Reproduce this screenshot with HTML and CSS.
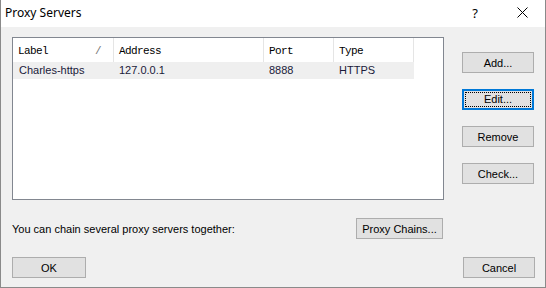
FILE: index.html
```html
<!DOCTYPE html>
<html lang="en">
<head>
    <meta charset="UTF-8">
    <title>Proxy Servers</title>
    <link rel="stylesheet" href="styles.css">
</head>
<body>

<div class="window">
  <div class="titlebar">
    <span class="title">Proxy Servers</span>
    <span class="help">?</span>
    <span class="close">
      <svg width="11" height="11" viewBox="0 0 11 11"><path d="M0.5 0.5 L10.5 10.5 M10.5 0.5 L0.5 10.5" stroke="#000" stroke-width="1" fill="none"/></svg>
    </span>
  </div>

  <div class="content">
    <div class="top">
      <!-- liste des serveurs -->
      <div class="list">
        <div class="grid header">
          <div class="cell">Label<span class="sort">/</span></div>
          <div class="cell">Address</div>
          <div class="cell">Port</div>
          <div class="cell">Type</div>
        </div>
        <div class="grid row">
          <div class="cell">Charles-https</div>
          <div class="cell">127.0.0.1</div>
          <div class="cell">8888</div>
          <div class="cell">HTTPS</div>
        </div>
      </div>

      <div class="side">
        <button class="btn">Add...</button>
        <button class="btn focused"><span>Edit...</span></button>
        <button class="btn">Remove</button>
        <button class="btn">Check...</button>
      </div>
    </div>

    <div class="chain">
      <span>You can chain several proxy servers together:</span>
      <button class="btn wide">Proxy Chains...</button>
    </div>

    <div class="bottom">
      <button class="btn">OK</button>
      <button class="btn">Cancel</button>
    </div>
  </div>
</div>

</body>
</html>
```

FILE: styles.css
```css
body {
    margin: 0;
    background: #fff;
    font-family: 'Liberation Sans', Arial, sans-serif;
}
.window {
    width: 546px;
    height: 288px;
    box-sizing: border-box;
    border: 1px solid #8a8a8a;
    border-top: none;
    background: #f0f0f0;
}
.titlebar {
    height: 27px;
    background: #fff;
    display: flex;
    align-items: center;
    padding-left: 4px;
}
.title {
    font-family: 'Noto Sans', sans-serif;
    font-size: 12px;
    color: #000;
    flex: 1;
    padding-bottom: 2px;
}
.help {
    font-family: 'Noto Sans', sans-serif;
    font-size: 13px;
    margin-right: 39px;
    padding-bottom: 2px;
}
.close {
    display: flex;
    margin-right: 17px;
    padding-bottom: 2px;
}
.content {
    padding: 10px 10px 0 11px;
}
.top {
    display: flex;
    gap: 18px;
}
.list {
    width: 432px;
    height: 163px;
    box-sizing: border-box;
    border: 1px solid #828790;
    background: #fff;
}
.grid {
    display: grid;
    grid-template-columns: 101px 150px 70px 80px;
}
.header .cell {
    height: 24px;
    line-height: 26px;
    font-family: 'Liberation Mono', 'Courier New', monospace;
    font-size: 11px;
    letter-spacing: -0.6px;
    color: #000;
    border-right: 1px solid #e5e5e5;
    padding-left: 5px;
    position: relative;
}
.sort {
    position: absolute;
    left: 82px;
    color: #777;
}
.row .cell {
    height: 17px;
    line-height: 17px;
    background: #efefef;
    font-size: 11px;
    color: #1a1a3a;
    padding-left: 5px;
}
.row .cell:first-child {
    padding-left: 6px;
}
.side {
    display: flex;
    flex-direction: column;
    gap: 16px;
    padding-top: 15px;
}
.btn {
    width: 72px;
    height: 21px;
    box-sizing: border-box;
    border: 1px solid #adadad;
    background: #e1e1e1;
    font-family: 'Liberation Sans', Arial, sans-serif;
    font-size: 11px;
    color: #000;
    padding: 0;
}
.btn.focused {
    border: 2px solid #0078d7;
    padding: 1px;
}
.btn.focused span {
    display: block;
    height: 100%;
    box-sizing: border-box;
    border: 1px dotted #000;
    line-height: 13px;
}
.chain {
    display: flex;
    justify-content: space-between;
    align-items: center;
    width: 431px;
    margin-top: 18px;
    font-size: 11px;
    color: #000;
}
.btn.wide {
    width: 87px;
}
.bottom {
    display: flex;
    justify-content: space-between;
    margin-top: 18px;
}
.bottom .btn:first-child {
    width: 74px;
}
```
